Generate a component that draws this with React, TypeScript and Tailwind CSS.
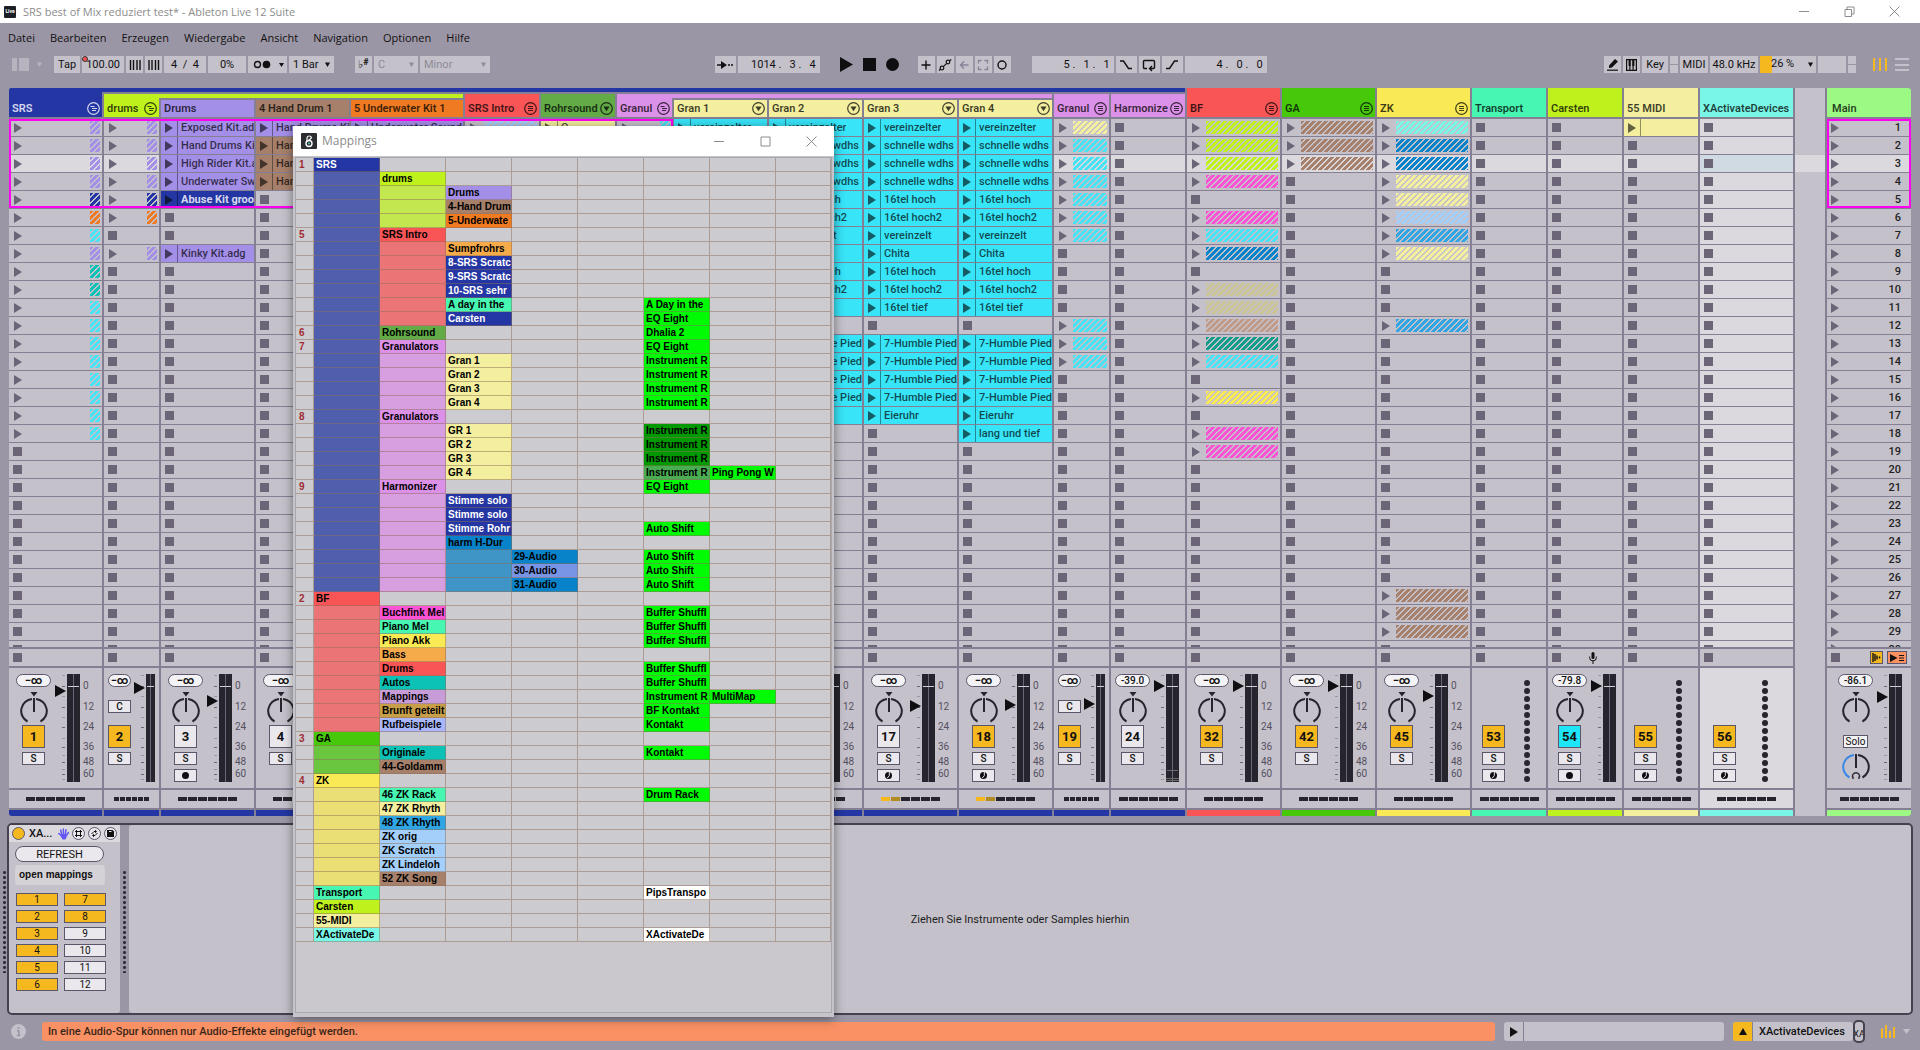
import React from "react";

const GRID =
  "grid gap-x-[2px] grid-cols-[93fr_55fr_93fr_93fr_112fr_74fr_74fr_55fr_93fr_93fr_93fr_93fr_55fr_74fr_93fr_93fr_93fr_74fr_74fr_74fr_93fr_30fr_84fr]";

const BG: Record<string, string> = {
  navy: "bg-[#2436a3]",
  navyF: "bg-[#505eae]",
  lime: "bg-[#bff21c]",
  limeF: "bg-[#c3e84f]",
  purple: "bg-[#a48fe8]",
  brown: "bg-[#a6806b]",
  orange: "bg-[#ef7a22]",
  red: "bg-[#f95556]",
  redF: "bg-[#eb7576]",
  green: "bg-[#62ab47]",
  orchid: "bg-[#dc91e8]",
  orchidF: "bg-[#d79fe0]",
  pale: "bg-[#f3ef9e]",
  cyan: "bg-[#37e4f8]",
  grass: "bg-[#47c80a]",
  grassF: "bg-[#6ac63f]",
  yellow: "bg-[#f9ea55]",
  yellowF: "bg-[#e9df74]",
  mint: "bg-[#47f6b1]",
  aqua: "bg-[#7af6e6]",
  mainGreen: "bg-[#9cf983]",
  amber: "bg-[#f6ab4a]",
  blue: "bg-[#0882c8]",
  blueF: "bg-[#3f95c6]",
  peri: "bg-[#7895e5]",
  magenta: "bg-[#fa54d5]",
  teal: "bg-[#0cc2b6]",
  mauve: "bg-[#c79cd9]",
  ochre: "bg-[#c79f48]",
  lilac: "bg-[#aab7fa]",
  sky: "bg-[#2fa5e4]",
  baby: "bg-[#a4cffb]",
  bright: "bg-[#00fb04]",
  forest: "bg-[#009a00]",
  dim: "bg-[#4aad52]",
  white: "bg-white",
};

const FG: Record<string, string> = {
  purple: "text-[#a48fe8]",
  navy: "text-[#2436a3]",
  orange: "text-[#ef7a22]",
  cyan: "text-[#46e2f5]",
  teal: "text-[#0cc2b6]",
  pale: "text-[#f3ef9e]",
  lime: "text-[#bff21c]",
  magenta: "text-[#fa54d5]",
  blue: "text-[#0882c8]",
  khaki: "text-[#cbc595]",
  rose: "text-[#c29a88]",
  pine: "text-[#129c8c]",
  yellow: "text-[#f9ea55]",
  brown: "text-[#a6806b]",
  aqua: "text-[#7af6e6]",
  baby: "text-[#a4cffb]",
  sky: "text-[#2fa5e4]",
};

/* ---------- session data ---------- */

type Fader = {
  level?: string;
  at?: number;
  pan?: "knob" | "c";
  num: string;
  on?: boolean;
  cue?: boolean;
  arm?: "audio" | "midi";
  dots?: boolean;
  lit?: boolean;
};

type Track = {
  name: string;
  color: string;
  base: string;
  depth: 0 | 1 | 2;
  size: "s" | "m" | "l";
  icon?: "fold" | "list" | "down";
  slots: Record<number, string>;
  mix: Fader;
  selected?: boolean;
};

const span = (a: number, b: number, v: string) => {
  const o: Record<number, string> = {};
  for (let i = a; i <= b; i++) o[i] = v;
  return o;
};

const granA: Record<number, string> = {
  1: "cyan:vereinzelter",
  ...span(2, 4, "cyan:schnelle wdhs"),
  5: "cyan:16tel hoch",
  6: "cyan:16tel hoch2",
  7: "cyan:vereinzelt",
  8: "cyan:Chita",
  9: "cyan:16tel hoch",
  10: "cyan:16tel hoch2",
  11: "cyan:16tel tief",
  ...span(13, 16, "cyan:7-Humble Pied"),
  17: "cyan:Eieruhr",
};

/* A slot is "color:name" for a clip and "~color" for a group's striped slot. */
const tracks: Track[] = [
  { name: "SRS", color: "navy", base: "navy", depth: 0, size: "l", icon: "fold", slots: { ...span(1, 4, "~purple"), 5: "~navy", 6: "~orange", 7: "~cyan", 8: "~purple", 9: "~teal", 10: "~teal", ...span(11, 18, "~cyan") }, mix: { level: "−∞", at: 691, pan: "knob", num: "1", on: true } },
  { name: "drums", color: "lime", base: "navy", depth: 1, size: "s", icon: "fold", slots: { ...span(1, 4, "~purple"), 5: "~navy", 6: "~orange", 8: "~purple" }, mix: { level: "−∞", at: 688, pan: "c", num: "2", on: true } },
  { name: "Drums", color: "purple", base: "navy", depth: 2, size: "l", slots: { 1: "purple:Exposed Kit.adg", 2: "purple:Hand Drums Kit", 3: "purple:High Rider Kit.adg", 4: "purple:Underwater Swing", 5: "navy:Abuse Kit groove", 8: "purple:Kinky Kit.adg" }, mix: { level: "−∞", at: 701, pan: "knob", num: "3", arm: "audio" } },
  { name: "4 Hand Drum 1", color: "brown", base: "navy", depth: 2, size: "l", slots: { 1: "purple:Hand Drums Kit", ...span(2, 4, "brown:Hand Drums") }, mix: { level: "−∞", at: 700, pan: "knob", num: "4" } },
  { name: "5 Underwater Kit 1", color: "orange", base: "navy", depth: 2, size: "l", slots: { 1: "purple:Underwater Sound" }, mix: { level: "−∞", at: 700, pan: "knob", num: "5" } },
  { name: "SRS Intro", color: "red", base: "navy", depth: 1, size: "m", icon: "list", slots: { 1: "~baby" }, mix: { level: "−∞", at: 686, pan: "knob", num: "6" } },
  { name: "Rohrsound", color: "green", base: "navy", depth: 1, size: "m", icon: "down", slots: { 1: "pale:Q" }, mix: { level: "−∞", at: 686, pan: "knob", num: "13" } },
  { name: "Granul", color: "orchid", base: "navy", depth: 1, size: "s", icon: "fold", slots: { 1: "~cyan" }, mix: { level: "−∞", at: 686, pan: "c", num: "14" } },
  { name: "Gran 1", color: "pale", base: "navy", depth: 2, size: "l", icon: "down", slots: granA, mix: { level: "−∞", at: 706, pan: "knob", num: "15" } },
  { name: "Gran 2", color: "pale", base: "navy", depth: 2, size: "l", icon: "down", slots: granA, mix: { level: "−∞", at: 706, pan: "knob", num: "16" } },
  { name: "Gran 3", color: "pale", base: "navy", depth: 2, size: "l", icon: "down", slots: granA, mix: { level: "−∞", at: 706, pan: "knob", num: "17", arm: "midi", lit: true } },
  { name: "Gran 4", color: "pale", base: "navy", depth: 2, size: "l", icon: "down", slots: { ...granA, 18: "cyan:lang und tief" }, mix: { level: "−∞", at: 705, pan: "knob", num: "18", on: true, arm: "midi", lit: true } },
  { name: "Granul", color: "orchid", base: "navy", depth: 1, size: "s", icon: "list", slots: { 1: "~pale", ...span(2, 7, "~cyan"), ...span(12, 14, "~cyan") }, mix: { level: "−∞", at: 704, pan: "c", num: "19", on: true } },
  { name: "Harmonize", color: "orchid", base: "navy", depth: 1, size: "m", icon: "list", slots: {}, mix: { level: "-39.0", at: 686, pan: "knob", num: "24" } },
  { name: "BF", color: "red", base: "red", depth: 0, size: "l", icon: "list", slots: { ...span(1, 3, "~lime"), 4: "~magenta", 6: "~magenta", 7: "~cyan", 8: "~blue", 10: "~khaki", 11: "~khaki", 12: "~rose", 13: "~pine", 14: "~cyan", 16: "~yellow", 18: "~magenta", 19: "~magenta" }, mix: { level: "−∞", at: 686, pan: "knob", num: "32", on: true } },
  { name: "GA", color: "grass", base: "grass", depth: 0, size: "l", icon: "list", slots: span(1, 3, "~brown"), mix: { level: "−∞", at: 686, pan: "knob", num: "42", on: true } },
  { name: "ZK", color: "yellow", base: "yellow", depth: 0, size: "l", icon: "list", slots: { 1: "~aqua", 2: "~blue", 3: "~blue", 4: "~pale", 5: "~pale", 6: "~baby", 7: "~sky", 8: "~pale", 12: "~sky", ...span(27, 29, "~brown") }, mix: { level: "−∞", at: 696, pan: "knob", num: "45", on: true } },
  { name: "Transport", color: "mint", base: "mint", depth: 0, size: "m", slots: {}, mix: { num: "53", on: true, arm: "midi", dots: true } },
  { name: "Carsten", color: "lime", base: "lime", depth: 0, size: "m", slots: {}, mix: { level: "-79.8", at: 686, pan: "knob", num: "54", on: true, cue: true, arm: "audio" } },
  { name: "55 MIDI", color: "pale", base: "pale", depth: 0, size: "m", slots: { 1: "pale:" }, mix: { num: "55", on: true, arm: "midi", dots: true } },
  { name: "XActivateDevices", color: "aqua", base: "aqua", depth: 0, size: "l", slots: {}, selected: true, mix: { num: "56", on: true, arm: "midi", dots: true } },
];

const ROWS = Array.from({ length: 30 }, (_, i) => i + 1);

/* ---------- small drawings ---------- */

const Play = ({ className = "" }: { className?: string }) => (
  <svg width="8" height="10" viewBox="0 0 8 10" className={`shrink-0 ${className}`} aria-hidden>
    <path d="M0 0 L8 5 L0 10Z" fill="currentColor" />
  </svg>
);

const Caret = ({ className = "" }: { className?: string }) => (
  <svg width="5" height="5" viewBox="0 0 5 5" className={`pointer-events-none shrink-0 ${className}`} aria-hidden>
    <path d="M0 0.5 H5 L2.5 5Z" fill="currentColor" />
  </svg>
);

const HeadIcon = ({ kind }: { kind: "fold" | "list" | "down" }) => (
  <svg width="13" height="13" viewBox="0 0 13 13" className="shrink-0" fill="none" stroke="currentColor" strokeWidth="1.2" aria-hidden>
    <circle cx="6.5" cy="6.5" r="5.8" />
    {kind === "list" && <path d="M4 4.5h5M4 6.5h5M4 8.5h5" />}
    {kind === "fold" && <path d="M3.5 4.5h4M5 6.5h5M5 8.5h4" />}
    {kind === "down" && <path d="M3.4 4.5h6.2L6.5 9.3Z" fill="currentColor" stroke="none" />}
  </svg>
);

const Knob = ({ cue }: { cue?: boolean }) => (
  <svg width="28" height="31" viewBox="0 0 28 31" className="shrink-0" fill="none" stroke="#26242c" strokeWidth="2" aria-hidden>
    {!cue && <path d="M10.5 0h7L14 4.5Z" fill="#26242c" stroke="none" />}
    <path d="M14 6V20" />
    <path d="M16 7A12 12 0 0 1 20.5 29.5" />
    <path d="M12 7A12 12 0 0 0 7.5 29.5" stroke={cue ? "#3a87e8" : "#26242c"} />
    {cue && <path d="M11 31v-2.4M17 31v-2.4M10.5 29.2a3.6 3.6 0 1 1 7 0" strokeWidth="1.4" />}
  </svg>
);

/* ---------- tool bar ---------- */

const TB = "h-[17px] shrink-0 bg-[#c4c1ca] text-[#111] text-[11px] leading-none flex items-center justify-center";

const Tool = ({ w, children, label, dim }: { w: string; children?: React.ReactNode; label?: string; dim?: boolean }) => (
  <button aria-label={label} className={`${TB} ${w} ${dim ? "text-[#86829a]" : ""}`}>
    {children}
  </button>
);

const Drop = ({ w, value, label, dim }: { w: string; value: string; label: string; dim?: boolean }) => (
  <div className={`relative flex ${w} h-[17px] shrink-0 ${dim ? "text-[#8f8b98]" : "text-[#111]"}`}>
    <select aria-label={label} defaultValue={value} className="h-full w-full appearance-none bg-[#c4c1ca] pl-1 text-[11px] leading-none">
      <option>{value}</option>
    </select>
    <Caret className="absolute right-1 top-1.5" />
  </div>
);

const Field = ({ w, value, label, align = "text-center" }: { w: string; value: string; label: string; align?: string }) => (
  <input aria-label={label} defaultValue={value} className={`h-[17px] shrink-0 ${w} bg-[#c4c1ca] px-1 ${align} text-[11px] leading-none text-[#111]`} />
);

const Line = ({ d, w = 14, sw = "1.4" }: { d: string; w?: number; sw?: string }) => (
  <svg width={w} height="14" viewBox={`0 0 ${w} 14`} fill="none" stroke="currentColor" strokeWidth={sw} aria-hidden>
    <path d={d} />
  </svg>
);

function Toolbar() {
  return (
    <div className="flex items-center pt-[10px] pr-[11px] pl-3">
      <div className="flex gap-[2px]">
        <button aria-label="Browser" className="mr-[7px] flex w-[33px] items-center gap-[2px] text-[#c4c1ca]">
          <span className="h-[13px] w-[5px] bg-[#b7b3bf]" />
          <span className="h-[13px] w-[10px] bg-[#b7b3bf]" />
          <Caret className="ml-1.5 text-[#b7b3bf]" />
        </button>
        <Tool w="w-[26px]">Tap</Tool>
        <div className="relative flex">
          <Field w="w-[42px]" value="100.00" label="Tempo" align="text-right" />
          <span className="absolute top-0 left-0 size-[6px] rounded-full border border-[#333] bg-[#f95556]" />
        </div>
        <Tool w="w-[17px]" label="Nudge down"><Line w={12} d="M1.5 2v10M4.5 2v10M8 2v10M11 2v10" /></Tool>
        <Tool w="w-[17px]" label="Nudge up"><Line w={12} d="M1 2v10M4 2v10M7.500 2v10M10.500 2v10" /></Tool>
        <Field w="w-[42px]" value="4  /  4" label="Time signature" />
        <Field w="w-[38px]" value="0%" label="Groove amount" />
        <Tool w="w-[39px]" label="Metronome">
          <svg width="32" height="11" viewBox="0 0 32 11" aria-hidden>
            <circle cx="5.500" cy="5.500" r="3" fill="none" stroke="#111" strokeWidth="1.400" />
            <circle cx="14.500" cy="5.500" r="3.800" fill="#111" />
            <path d="M27 4h5l-2.500 4z" fill="#111" />
          </svg>
        </Tool>
        <Drop w="w-[45px]" value="1 Bar" label="Quantization" />
        <div className="w-[17px]" />
        <Tool w="w-[17px]" label="Scale mode"><span className="text-[11px]">♭</span><span className="mb-1 text-[9px] font-bold">#</span></Tool>
        <Drop w="w-[44px]" value="C" label="Root note" dim />
        <Drop w="w-[70px]" value="Minor" label="Scale name" dim />
      </div>
      <div className="flex-[2_1_0%]" />
      <div className="flex items-center gap-[2px]">
        <Tool w="w-[21px]" label="Follow">
          <svg width="16" height="10" viewBox="0 0 16 10" aria-hidden><path d="M0 5h5M11 5h2M14 5h2" stroke="#111" strokeWidth="1.400" /><path d="M4 1l6 4-6 4z" fill="#111" /></svg>
        </Tool>
        <Field w="w-[82px]" value="1014 .   3 .   4" label="Position" align="text-right" />
        <button aria-label="Play" className="ml-[18px]"><svg width="13" height="15" viewBox="0 0 13 15"><path d="M0 0L13 7.500L0 15Z" fill="#0f0f11" /></svg></button>
        <button aria-label="Stop" className="ml-2 size-[13px] bg-[#0f0f11]" />
        <button aria-label="Record" className="ml-2 size-[13px] rounded-full bg-[#0f0f11]" />
        <div className="w-[15px]" />
        <Tool w="w-[17px]" label="MIDI overdub"><Line d="M7 2.500v9M2.500 7h9" /></Tool>
        <Tool w="w-[17px]" label="Automation arm">
          <svg width="14" height="12" viewBox="0 0 14 12" fill="none" stroke="#111" strokeWidth="1.200" aria-hidden><circle cx="4" cy="9" r="1.800" /><circle cx="10" cy="3" r="1.800" /><path d="M5.300 7.700L8.700 4.300M1 11.500l1.500-1.200M13.300.5L11.500 1.700" /></svg>
        </Tool>
        <Tool w="w-[17px]" label="Re-enable automation" dim><Line d="M11.500 7H4M7 3.500L3.500 7L7 10.500" /></Tool>
        <Tool w="w-[17px]" label="Capture MIDI" dim><Line d="M2.500 5.500v-3h3M8.500 2.500h3v3M11.500 8.500v3h-3M5.500 11.500h-3v-3" /></Tool>
        <Tool w="w-[17px]" label="Session record"><Line d="M7 3a4 4 0 1 0 0 8a4 4 0 1 0 0-8" /></Tool>
        <div className="w-[17px]" />
        <Field w="w-[82px]" value="5 .   1 .   1" label="Loop start" align="text-right" />
        <Tool w="w-[21px]" label="Punch in"><Line d="M1 3h3.500l5 7.500H13" /></Tool>
        <Tool w="w-[21px]" label="Loop"><Line d="M5 10.500H2.500a1 1 0 0 1-1-1V3.500a1 1 0 0 1 1-1h9a1 1 0 0 1 1 1v6a1 1 0 0 1-1 1H8M10 8l-2.500 2.500L10 13" /></Tool>
        <Tool w="w-[21px]" label="Punch out"><Line d="M1 10.500h3.500l5-7.500H13" /></Tool>
        <Field w="w-[82px]" value="4 .   0 .   0" label="Loop length" align="text-right" />
      </div>
      <div className="flex-[3_1_0%]" />
      <div className="flex items-center gap-[2px]">
        <Tool w="w-[17px]" label="Draw mode">
          <svg width="12" height="13" viewBox="0 0 12 13" aria-hidden><path d="M2 10V7.500L8 1l3 2.500L5 9.500Z" fill="#111" /><path d="M0 12.200h11" stroke="#111" strokeWidth="1.200" /></svg>
        </Tool>
        <Tool w="w-[17px]" label="Computer MIDI keyboard">
          <svg width="11" height="12" viewBox="0 0 11 12" aria-hidden><path d="M.6.6h9.800v10.800H.6zM3.900 7v5M7.100 7v5" fill="none" stroke="#111" strokeWidth="1.200" /><path d="M2.600 0h2.200v7H2.600zM6.200 0h2.200v7H6.200z" fill="#111" /></svg>
        </Tool>
        <Tool w="w-[26px]">Key</Tool>
        <div className="flex w-2 flex-col gap-px"><span className="h-2 bg-[#c4c1ca]" /><span className="h-2 bg-[#c4c1ca]" /></div>
        <Tool w="w-[28px]">MIDI</Tool>
        <Tool w="w-[48px]">48.0 kHz</Tool>
        <button className="flex h-[17px] w-[56px] items-center justify-between bg-[linear-gradient(90deg,#f6b81f_12px,#c4c1ca_12px)] pr-[3px] pl-[11px] text-[11px] text-[#111]">
          26 %<Caret />
        </button>
        <div className="h-[17px] w-[28px] bg-[#c4c1ca]" />
        <div className="flex w-2 flex-col gap-px"><span className="h-2 bg-[#c4c1ca]" /><span className="h-2 bg-[#c4c1ca]" /></div>
        <button aria-label="Session view" className="ml-[15px] flex h-[13px] w-[14px] justify-between"><span className="w-[2px] bg-[#f6b81f]" /><span className="w-[2px] bg-[#f6b81f]" /><span className="w-[2px] bg-[#f6b81f]" /></button>
        <button aria-label="Arrangement view" className="ml-1.5 flex h-[13px] w-[14px] flex-col justify-between"><span className="h-[2px] bg-[#c4c1ca]" /><span className="h-[2px] bg-[#c4c1ca]" /><span className="h-[2px] bg-[#c4c1ca]" /></button>
      </div>
    </div>
  );
}

/* ---------- track headers ---------- */

const PLACE = {
  0: "row-start-1 row-end-6",
  1: "row-start-3 row-end-6",
  2: "row-start-5 row-end-6",
};

function Headers() {
  return (
    <div className={`${GRID} grid-rows-[4px_2px_4px_2px_17px_2px] overflow-hidden rounded-t-[3px] bg-[#857f94]`}>
      <div className="col-start-1 col-end-15 row-start-1 bg-[#2436a3]" />
      <div className="col-start-2 col-end-6 row-start-3 bg-[#bff21c]" />
      <div className="col-start-8 col-end-13 row-start-3 bg-[#dc91e8]" />
      {tracks.map((t, i) => (
        <div
          key={i}
          style={{ gridColumnStart: i + 1 }}
          className={`flex min-w-0 items-end ${PLACE[t.depth]} ${BG[t.color]} ${t.color === "navy" ? "text-[#d6d8f0]" : "text-black/75"}`}
        >
          <div className="flex h-[17px] min-w-0 flex-1 items-center pr-[2px] pl-[3px]">
            <span className="min-w-0 flex-1 overflow-hidden text-[11px] leading-[17px] font-semibold whitespace-nowrap">{t.name}</span>
            {t.icon && <HeadIcon kind={t.icon} />}
          </div>
        </div>
      ))}
      <div className="col-start-22 row-start-1 row-end-7 bg-[#c4c1ca]" />
      <div className="col-start-23 row-start-1 row-end-6 flex items-end bg-[#9cf983] pl-[5px] text-[11px] leading-[17px] font-semibold text-black/75">Main</div>
    </div>
  );
}

/* ---------- clip slots ---------- */

function Slot({ row, value, track }: { row: number; value?: string; track: Track }) {
  const h = row === 30 ? "h-[6px] items-start overflow-hidden pt-1" : "h-[17px] items-center";
  const plain = track.selected
    ? row === 3 ? "bg-[#cfdae3]" : "bg-[#dbd9de]"
    : row === 3 ? "bg-[#dbd9de]" : "bg-[#c4c1ca]";
  if (!value) {
    return (
      <button aria-label={`Stop ${track.name} ${row}`} className={`flex w-full shrink-0 pl-1 ${h} ${plain}`}>
        <span className="size-[9px] shrink-0 bg-[#6b6577]" />
      </button>
    );
  }
  if (value[0] === "~") {
    return (
      <button aria-label={`Launch ${track.name} ${row}`} className={`flex w-full shrink-0 justify-between pr-[2px] pl-[5px] text-[#6b6577] ${h} ${plain}`}>
        <Play />
        <span
          className={`h-[13px] bg-[linear-gradient(135deg,currentColor_0_32%,transparent_32%_50%,currentColor_50%_82%,transparent_82%)] bg-[size:6px_6px] ${FG[value.slice(1)]} ${track.icon === "fold" ? "w-[10px]" : "ml-1.5 flex-1"}`}
        />
      </button>
    );
  }
  const [color, name] = value.split(":");
  const navy = color === "navy";
  return (
    <button className={`flex w-full shrink-0 overflow-hidden pl-1 text-left ${h} ${BG[color]}`}>
      <Play className={navy ? "text-[#11193f]" : "text-black/60"} />
      <span className="ml-1 h-full w-px shrink-0 bg-black/40" />
      <span className={`ml-[3px] overflow-hidden text-[11px] leading-[17px] whitespace-nowrap ${navy ? "font-bold text-[#d6d8f0]" : "font-medium text-black/70"}`}>{name}</span>
    </button>
  );
}

const StopSquare = ({ label }: { label: string }) => (
  <button aria-label={label} className="size-[9px] bg-[#6b6577]" />
);

/* ---------- mixer ---------- */

const TICKS = [1, 12, 22, 33, 43, 53, 64, 73, 81, 88, 95, 100, 105];
const MAJOR = [12, 33, 53, 73, 88, 100];

function FaderStrip({ at, narrow, label, signal }: { at: number; narrow?: boolean; label: string; signal?: boolean }) {
  const w = narrow ? 9 : 13;
  const y = at - 674;
  return (
    <div className="relative shrink-0">
      <svg width={12 + w} height="108" viewBox={`0 0 ${12 + w} 108`} shapeRendering="crispEdges" aria-hidden>
        {TICKS.map((t) => (
          <rect key={t} x="7" y={t} width="3" height="1" fill={MAJOR.includes(t) ? "#6b6577" : "#9c97a6"} />
        ))}
        <rect x="12" y="0" width={w} height="108" rx="1" fill="#26242c" />
        <rect x={12 + (w - 1) / 2} y="0" width="1" height="108" fill="#6b6577" />
        <rect x="13" y="12" width={w - 2} height="1" fill="#d0ced6" />
        {signal && <path d="M13 96.500h11M12 104.500h13M12 106h13" stroke="#6b6b6b" />}
        <path d={`M0 ${y - 6}L11 ${y}L0 ${y + 6}Z`} fill="#0f0f11" shapeRendering="auto" />
      </svg>
      <input type="range" aria-label={label} className="absolute inset-0 h-full w-full opacity-0" />
    </div>
  );
}

const SCALE: [string, string][] = [
  ["0", "h-[20px]"],
  ["12", "h-[21px]"],
  ["24", "h-[20px]"],
  ["36", "h-[19px]"],
  ["48", "h-[12px]"],
  ["60", "h-[12px]"],
];

const BOX = "flex h-[13px] w-[23px] items-center justify-center border border-[#5c566a] bg-[#eae8ed] text-[10px] leading-none font-medium text-[#111]";

function Level({ text, w = "w-[35px]" }: { text: string; w?: string }) {
  return (
    <output className={`flex h-[13px] ${w} items-center justify-center rounded-full border border-[#5c566a] bg-[#f3f2f5] leading-none text-[#111] ${text === "−∞" ? "text-[11px] font-bold" : "text-[10px] font-medium"}`}>
      {text}
    </output>
  );
}

function Channel({ t }: { t: Track }) {
  const m = t.mix;
  const small = t.size === "s";
  return (
    <div className={`flex h-[120px] shrink-0 overflow-hidden pt-1.5 ${t.size === "l" ? "pl-[7px]" : "pl-1"} ${t.selected ? "bg-[#dbd9de]" : "bg-[#c4c1ca]"}`}>
      <div className={`flex shrink-0 flex-col items-center ${small ? "w-[23px]" : "w-[35px]"}`}>
        <div className="h-[13px]">{m.level && <Level text={m.level} w={small ? "w-[23px]" : "w-[35px]"} />}</div>
        <div className={`h-[38px] ${m.pan === "c" ? "pt-[13px]" : "pt-[5px]"}`}>
          {m.pan === "knob" && <Knob />}
          {m.pan === "c" && <button className={BOX}>C</button>}
        </div>
        <button
          className={`flex h-[23px] w-[23px] shrink-0 items-center justify-center border border-[#5c566a] text-[13px] leading-none font-bold text-[#111] ${m.cue ? "bg-[#1ee6f8]" : m.on ? "bg-[#f6b81f]" : "bg-[#eae8ed]"}`}
        >
          {m.num}
        </button>
        <button className={`mt-1 shrink-0 ${BOX}`}>S</button>
        {m.arm && (
          <button aria-label="Arm" className={`mt-1 shrink-0 ${BOX}`}>
            <svg width="7" height="7" viewBox="0 0 7 7" aria-hidden>
              <circle cx="3.500" cy="3.500" r="3.500" fill="#0f0f11" />
              {m.arm === "midi" && <path d="M4.300 0v3.700L2.300 6" stroke="#eae8ed" fill="none" />}
            </svg>
          </button>
        )}
      </div>
      {m.dots ? (
        <svg width="6" height="108" viewBox="0 0 6 108" className={t.size === "l" ? "ml-5" : "ml-[13px]"} aria-hidden>
          {ROWS.slice(0, 13).map((n) => (
            <circle key={n} cx="3" cy={1 + n * 8} r="3" fill="#26242c" />
          ))}
        </svg>
      ) : (
        <div className={small ? "ml-[3px]" : "ml-1"}>
          <FaderStrip at={m.at ?? 686} narrow={small} label={`${t.name} volume`} signal={m.num === "24"} />
        </div>
      )}
      {t.size === "l" && !m.dots && (
        <div className="ml-[3px] flex flex-col pt-[2px] text-[10px] leading-none text-[#55505f]">
          {SCALE.map(([v, h]) => (
            <span key={v} className={`flex items-center ${h}`}>{v}</span>
          ))}
        </div>
      )}
    </div>
  );
}

function Dashes({ small, lit, bg }: { small?: boolean; lit?: boolean; bg: string }) {
  return (
    <div className={`flex h-[18px] shrink-0 items-center justify-center gap-px ${bg}`}>
      {[0, 1, 2, 3, 4, 5].map((i) => (
        <span key={i} className={`h-1 ${small ? "w-[5px]" : "w-[9px]"} ${lit && i === 0 ? "bg-[#f6b81f]" : lit && i === 1 ? "bg-[#b38b23]" : "bg-[#26242c]"}`} />
      ))}
    </div>
  );
}

function TrackColumn({ t }: { t: Track }) {
  return (
    <div className="flex min-w-0 flex-col gap-[2px]">
      <div className="flex flex-col gap-px">
        {ROWS.map((r) => (
          <Slot key={r} row={r} value={t.slots[r]} track={t} />
        ))}
      </div>
      <div className="flex h-[17px] shrink-0 items-center bg-[#c4c1ca] pl-1">
        <StopSquare label={`Stop ${t.name}`} />
        {t.mix.cue && (
          <svg width="8" height="12" viewBox="0 0 8 12" className="ml-[28px]" fill="none" stroke="#111" aria-hidden>
            <rect x="2.500" y="0" width="3" height="7" rx="1.500" fill="#111" stroke="none" />
            <path d="M.6 4.500v1a3.400 3.400 0 0 0 6.800 0v-1M4 9v3" />
          </svg>
        )}
      </div>
      <Channel t={t} />
      <Dashes small={t.size === "s"} lit={t.mix.lit} bg={t.selected ? "bg-[#dbd9de]" : "bg-[#c4c1ca]"} />
      <div className={`h-[6px] shrink-0 ${BG[t.base]}`} />
    </div>
  );
}

function MainColumn() {
  return (
    <div className="flex min-w-0 flex-col gap-[2px]">
      <div className="flex flex-col gap-px">
        {ROWS.map((r) => (
          <button
            key={r}
            className={`flex w-full shrink-0 justify-between overflow-hidden pr-[10px] pl-1 text-[11px] leading-none font-medium text-[#222] ${r === 30 ? "h-[6px] items-start pt-[3px]" : "h-[17px] items-center"} ${r === 3 ? "bg-[#dbd9de]" : "bg-[#c4c1ca]"}`}
          >
            <Play className="text-[#6b6577]" />
            {r}
          </button>
        ))}
      </div>
      <div className="flex h-[17px] shrink-0 items-center bg-[#c4c1ca] pr-1 pl-1">
        <StopSquare label="Stop all clips" />
        <div className="flex-1" />
        <button aria-label="Back to arrangement" className="flex h-[13px] w-[13px] items-center justify-center border border-[#5c566a] bg-[#f6b81f]">
          <svg width="9" height="9" viewBox="0 0 9 9" aria-hidden><path d="M1 0v9M7.500 3.500v2" stroke="#111" strokeWidth="1.400" /><path d="M3 1v7M5 2.500v4" stroke="#111" strokeWidth="1.400" /></svg>
        </button>
        <button aria-label="Scene launch" className="ml-1 flex h-[13px] w-[20px] items-center justify-center border border-[#5c566a] bg-[#fb9060]">
          <svg width="14" height="8" viewBox="0 0 14 8" aria-hidden><path d="M0 0l7.500 4L0 8z" fill="#111" /><path d="M9 1.500h5M9 4h5M9 6.500h5" stroke="#111" strokeWidth="1.200" /></svg>
        </button>
      </div>
      <div className="flex h-[120px] shrink-0 bg-[#c4c1ca] pt-1.5 pl-[11px]">
        <div className="flex w-[35px] shrink-0 flex-col items-center">
          <Level text="-86.1" />
          <div className="h-[48px] pt-[5px]"><Knob /></div>
          <button className="flex h-[13px] w-[25px] shrink-0 items-center justify-center border border-[#5c566a] bg-[#f3f2f5] text-[10px] leading-none text-[#111]">Solo</button>
          <Knob cue />
        </div>
        <div className="ml-1"><FaderStrip at={697} label="Main volume" /></div>
      </div>
      <Dashes bg="bg-[#c4c1ca]" />
      <div className="h-[6px] shrink-0 bg-[#9cf983]" />
    </div>
  );
}

function Session() {
  return (
    <div className="px-[9px] pt-[15px]">
      <Headers />
      <div className="relative">
        <div className={`${GRID} overflow-hidden rounded-b-[3px] bg-[#857f94]`}>
          {tracks.map((t, i) => (
            <TrackColumn key={i} t={t} />
          ))}
          <div className="flex flex-col bg-[#c4c1ca] pt-9">
            <div className="h-[17px] bg-[#dbd9de]" />
          </div>
          <MainColumn />
        </div>
        <div className="pointer-events-none absolute inset-x-0 top-0 flex h-[89px]">
          <div className="w-[34.900%] border-2 border-[#ff00f0]" />
          <div className="flex-1" />
          <div className="w-[4.420%] border-2 border-[#ff00f0]" />
        </div>
      </div>
    </div>
  );
}

/* ---------- device view ---------- */

const Grip = () => (
  <div className="h-[103px] w-[3px] bg-[radial-gradient(circle,#2e2b36_1px,transparent_2px)] bg-[size:3px_5px]" />
);

const RoundIcon = ({ label, children }: { label: string; children: React.ReactNode }) => (
  <button aria-label={label} className="flex size-[13px] items-center justify-center rounded-full border border-[#5c566a] bg-[#eae8ed]">
    <svg width="9" height="9" viewBox="0 0 9 9" className="shrink-0" fill="none" stroke="#111" strokeWidth="1" aria-hidden>{children}</svg>
  </button>
);

function DeviceView() {
  return (
    <div className="flex flex-1 items-stretch pt-[7px] pr-[7px]">
      <div className="flex w-[7px] items-center justify-end pt-1 pr-px"><Grip /></div>
      <div className="flex flex-1 overflow-hidden rounded-[5px] border-2 border-[#45414e] bg-[#9b96a5]">
        <section className="w-[111px] shrink-0 rounded-[3px] bg-[#c4c1ca]">
          <div className="flex h-[17px] items-center gap-[3px] bg-[#dbd9de] pr-[3px] pl-[3px]">
            <button aria-label="Device on" className="size-[13px] rounded-full border border-[#5c566a] bg-[#f6b81f]" />
            <span className="ml-px flex-1 text-[11px] leading-none font-medium text-[#111]">XA...</span>
            <svg width="11" height="12" viewBox="0 0 11 12" fill="none" stroke="#6456f0" strokeWidth="1.500" strokeLinecap="round" aria-hidden>
              <path d="M3.500 6L2.700 2M5.400 6V1M7.300 6l.7-4.200M8.500 7.500l1.800-3M3.500 8L.8 5.500" />
              <path d="M3 6h5.500v3.500L7.300 11.500H4.600L3 9Z" fill="#6456f0" stroke="none" />
            </svg>
            <RoundIcon label="Edit device"><path d="M1 2.500h7M1 6.500h7M2.500 1v7M6.500 1v7" /></RoundIcon>
            <RoundIcon label="Hot-swap">
              <path d="M1.500 5L4 2.500h1.500M7.500 4L5 6.500H3.500" />
              <path d="M5 .8v3.400L7 2.500zM4 4.800v3.400L2 6.500z" fill="#111" stroke="none" />
            </RoundIcon>
            <RoundIcon label="Save preset"><path d="M1 1h5.500L8 2.500V8H1Z" fill="#111" stroke="none" /><path d="M3 2.500h2.500" stroke="#eae8ed" /></RoundIcon>
          </div>
          <div className="pt-1 pl-1.5">
            <button className="flex h-[16px] w-[89px] items-center justify-center rounded-full border border-[#5c566a] bg-[#eae8ed] text-[11px] leading-none text-[#111]">REFRESH</button>
            <button className="mt-[3px] flex h-5 w-[90px] items-center rounded bg-[#d4d2d7] pl-1 font-['Liberation_Sans',sans-serif] text-[10px] leading-none font-bold text-[#111]">open mappings</button>
            <div className="mt-2 ml-px grid w-[90px] grid-flow-col grid-cols-2 grid-rows-6 gap-x-1.5 gap-y-1">
              {ROWS.slice(0, 12).map((n) => (
                <button key={n} className={`flex h-[13px] items-center justify-center border border-[#5c566a] text-[10px] leading-none text-[#111] ${n < 9 ? "bg-[#f6b81f]" : "bg-[#eae8ed]"}`}>{n}</button>
              ))}
            </div>
          </div>
        </section>
        <div className="flex w-[9px] shrink-0 items-center justify-center pt-1"><Grip /></div>
        <section className="flex flex-1 items-center justify-center rounded-[3px] bg-[#c4c1ca]">
          <p className="text-[11px] leading-none text-[#222]">Ziehen Sie Instrumente oder Samples hierhin</p>
        </section>
      </div>
    </div>
  );
}

function StatusBar() {
  return (
    <div className="flex items-center pt-[7px] pr-[9px] pb-[9px] pl-[11px]">
      <svg width="15" height="15" viewBox="0 0 15 15" aria-hidden>
        <circle cx="7.500" cy="7.500" r="7.500" fill="#c4c1ca" />
        <path d="M7.500 3v2M6 6.800h1.800V11.500M5.800 11.500h3.600" stroke="#9b96a5" strokeWidth="1.600" fill="none" />
      </svg>
      <p className="ml-4 h-[19px] flex-1 rounded-[3px] bg-[#fa9164] pl-1.5 text-[11px] leading-[19px] font-medium text-[#3a2618]">In eine Audio-Spur können nur Audio-Effekte eingefügt werden.</p>
      <div className="ml-[9px] flex h-[19px] w-[220px] overflow-hidden rounded-[3px] bg-[#c4c1ca]">
        <button aria-label="Preview" className="flex w-5 items-center justify-center border-r border-[#857f94] text-[#111]"><Play /></button>
      </div>
      <div className="ml-[9px] flex h-[19px] w-[120px] overflow-hidden rounded-[3px] bg-[#c4c1ca]">
        <button aria-label="Show devices" className="flex w-5 items-center justify-center border-r border-[#857f94] bg-[#f6b81f]">
          <svg width="8" height="7" viewBox="0 0 8 7"><path d="M4 0l4 7H0z" fill="#111" /></svg>
        </button>
        <span className="ml-1.5 text-[11px] leading-[19px] font-medium text-[#111]">XActivateDevices</span>
      </div>
      <button className="-my-1 flex h-[23px] w-3 items-end justify-center overflow-hidden rounded-[5px] border-2 border-[#45414e] bg-[#c4c1ca] pb-0.5 text-[9px] leading-none text-[#111]">XA</button>
      <svg width="14" height="13" viewBox="0 0 14 13" className="ml-4" aria-hidden><path d="M1 3.500V13M5 0v13M9 6v7M13 2v11" stroke="#f6b81f" strokeWidth="2" /></svg>
      <svg width="7" height="5" viewBox="0 0 7 5" className="mr-px ml-2" aria-hidden><path d="M0 0h7L3.500 5z" fill="#c4c1ca" /></svg>
    </div>
  );
}

/* ---------- mappings window ---------- */

/* Each row: number | four tree cells | two device cells. */
const MAP = `1|navy:SRS
|navyF:|lime:drums
|navyF:|limeF:|purple:Drums
|navyF:|limeF:|brown:4-Hand Drum
|navyF:|limeF:|orange:5-Underwate
5|navyF:|red:SRS Intro
|navyF:|redF:|amber:Sumpfrohrs
|navyF:|redF:|navy:8-SRS Scratc
|navyF:|redF:|navy:9-SRS Scratc
|navyF:|redF:|navy:10-SRS sehr
|navyF:|redF:|mint:A day in the||bright:A Day in the
|navyF:|redF:|navy:Carsten||bright:EQ Eight
6|navyF:|green:Rohrsound|||bright:Dhalia 2
7|navyF:|orchid:Granulators|||bright:EQ Eight
|navyF:|orchidF:|pale:Gran 1||bright:Instrument R
|navyF:|orchidF:|pale:Gran 2||bright:Instrument R
|navyF:|orchidF:|pale:Gran 3||bright:Instrument R
|navyF:|orchidF:|pale:Gran 4||bright:Instrument R
8|navyF:|orchid:Granulators
|navyF:|orchidF:|pale:GR 1||forest:Instrument R
|navyF:|orchidF:|pale:GR 2||forest:Instrument R
|navyF:|orchidF:|pale:GR 3||forest:Instrument R
|navyF:|orchidF:|pale:GR 4||dim:Instrument R|bright:Ping Pong W
9|navyF:|orchid:Harmonizer|||bright:EQ Eight
|navyF:|orchidF:|navy:Stimme solo
|navyF:|orchidF:|navy:Stimme solo
|navyF:|orchidF:|navy:Stimme Rohr||bright:Auto Shift
|navyF:|orchidF:|blue:harm H-Dur
|navyF:|orchidF:|blueF:|blue:29-Audio|bright:Auto Shift
|navyF:|orchidF:|blueF:|peri:30-Audio|bright:Auto Shift
|navyF:|orchidF:|blueF:|blue:31-Audio|bright:Auto Shift
2|red:BF
|redF:|magenta:Buchfink Mel|||bright:Buffer Shuffl
|redF:|mint:Piano Mel|||bright:Buffer Shuffl
|redF:|yellow:Piano Akk|||bright:Buffer Shuffl
|redF:|amber:Bass
|redF:|red:Drums|||bright:Buffer Shuffl
|redF:|teal:Autos|||bright:Buffer Shuffl
|redF:|mauve:Mappings|||bright:Instrument R|bright:MultiMap
|redF:|ochre:Brunft geteilt|||bright:BF Kontakt
|redF:|lilac:Rufbeispiele|||bright:Kontakt
3|grass:GA
|grassF:|teal:Originale|||bright:Kontakt
|grassF:|brown:44-Goldamm
4|yellow:ZK
|yellowF:|mint:46 ZK Rack|||bright:Drum Rack
|yellowF:|pale:47 ZK Rhyth
|yellowF:|sky:48 ZK Rhyth
|yellowF:|baby:ZK orig
|yellowF:|baby:ZK Scratch
|yellowF:|baby:ZK Lindeloh
|yellowF:|brown:52 ZK Song
|mint:Transport||||white:PipsTranspo
|lime:Carsten
|pale:55-MIDI
|aqua:XActivateDe||||white:XActivateDe`
  .split("\n")
  .map((l) => {
    const [n, a = "", b = "", c = "", d = "", e = "", f = ""] = l.split("|");
    return { n, cells: [a, b, c, d, "", e, f, ""] };
  });

const TD = "h-[14px] overflow-hidden border-r border-b border-[#8c6e5a]/50 p-0 whitespace-nowrap";

function Mappings() {
  return (
    <div role="dialog" aria-label="Mappings" className="absolute top-[126px] left-[293px] flex h-[891px] w-[541px] flex-col bg-[#c4c4ca] shadow-[0_2px_10px_rgba(0,0,0,0.45)]">
      <div className="flex h-[30px] shrink-0 items-center bg-white pr-[17px] pl-2 text-[#8c8c8c]">
        <svg width="16" height="16" viewBox="0 0 16 16" aria-hidden>
          <rect width="16" height="16" rx="1" fill="#2b2d31" />
          <circle cx="8" cy="10.500" r="3" fill="none" stroke="#fff" strokeWidth="1.400" />
          <path d="M6 8.500V4.800a2.300 2.300 0 0 1 4.500 0L7 8" fill="none" stroke="#fff" strokeWidth="1.200" />
          <circle cx="8" cy="10.500" r="1" fill="#4fd0c0" />
        </svg>
        <span className="ml-[5px] flex-1 font-['Open_Sans',sans-serif] text-[12px] leading-none">Mappings</span>
        <WindowButtons max="M1 1h9v9h-9z" gap="gap-[35px]" />
      </div>
      <div className="mx-[2px] mt-px mb-1 flex-1 border border-[#a9a8ae] bg-[#cac8cc]">
        <table className="w-full table-fixed border-separate border-spacing-0 bg-[#cccbcf] font-['Liberation_Sans',sans-serif] text-[10px] leading-[12px] font-bold text-black">
          <colgroup>
            <col className="w-[18px]" />
            <col className="w-[66px]" /><col className="w-[66px]" /><col className="w-[66px]" /><col className="w-[66px]" />
            <col className="w-[66px]" /><col className="w-[66px]" /><col className="w-[66px]" />
            <col />
          </colgroup>
          <tbody>
            {MAP.map((r, i) => (
              <tr key={i}>
                <th scope="row" className={`${TD} pl-[3px] text-left text-[#a02c34]`}>{r.n}</th>
                {r.cells.map((c, j) => {
                  const [color, text] = c.split(":");
                  return (
                    <td key={j} className={`${TD} ${c ? BG[color] : ""} ${color === "navy" ? "text-white" : ""}`}>
                      <div className="h-[13px] overflow-hidden pt-px pl-[2px]">{text}</div>
                    </td>
                  );
                })}
              </tr>
            ))}
          </tbody>
        </table>
      </div>
    </div>
  );
}

function WindowButtons({ max, gap }: { max: string; gap: string }) {
  return (
    <div className={`flex items-center ${gap}`}>
      {([["Minimize", "M0 5.500h10"], ["Maximize", max], ["Close", "M.5.5l10 10M10.500.5l-10 10"]] as const).map(([l, d]) => (
        <button key={l} aria-label={l}>
          <svg width="11" height="11" viewBox="0 0 11 11" fill="none" stroke="currentColor" strokeWidth="1"><path d={d} /></svg>
        </button>
      ))}
    </div>
  );
}

/* ---------- application ---------- */

export default function App() {
  return (
    <div className="relative flex min-h-screen flex-col bg-[#9b96a5] font-[Roboto,sans-serif]">
      <header className="flex h-[23px] items-center bg-white pr-5 pl-1 text-[#8c8c8c]">
        <span className="flex h-3 w-3 items-center justify-center rounded-[1px] bg-[#1d1f26] text-[5px] font-bold text-white">Live</span>
        <h1 className="ml-[7px] flex-1 font-['Open_Sans',sans-serif] text-[11px] leading-none">SRS best of Mix reduziert test* - Ableton Live 12 Suite</h1>
        <WindowButtons max="M1 3.500h6.500V10.500H1zM3 3.500V1h7v7H7.500" gap="gap-[34px]" />
      </header>
      <nav className="flex h-[23px] items-center gap-[15px] pt-1.5 pl-2 font-['Open_Sans',sans-serif] text-[11px] leading-none text-[#111]">
        {["Datei", "Bearbeiten", "Erzeugen", "Wiedergabe", "Ansicht", "Navigation", "Optionen", "Hilfe"].map((m) => (
          <button key={m}>{m}</button>
        ))}
      </nav>
      <Toolbar />
      <Session />
      <DeviceView />
      <StatusBar />
      <Mappings />
    </div>
  );
}
